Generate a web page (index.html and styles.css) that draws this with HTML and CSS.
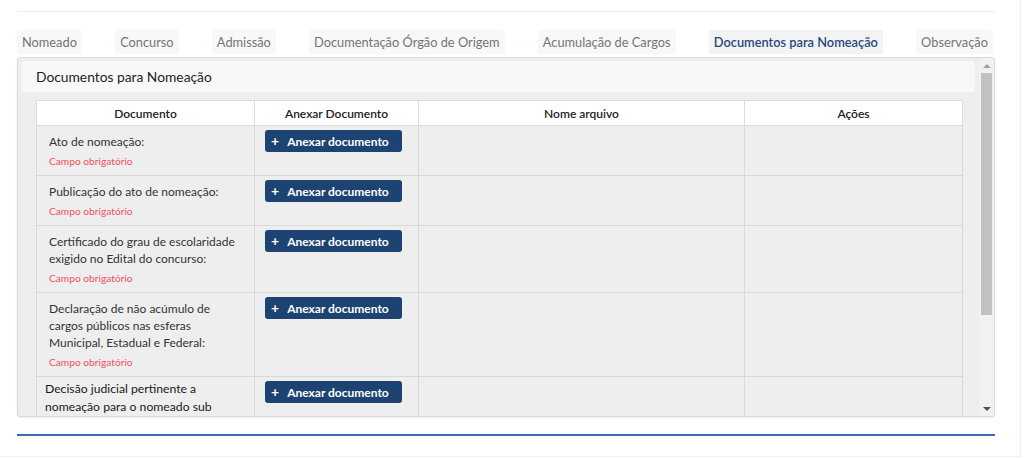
FILE: index.html
```html
<!DOCTYPE html>
<html lang="pt-BR">
<head>
<meta charset="utf-8">
<title>Documentos para Nomeação</title>
<link rel="stylesheet" href="styles.css">
</head>
<body>
<div class="page">
  <div class="top-rule"></div>
  <nav class="tabs">
    <span class="tab">Nomeado</span>
    <span class="tab">Concurso</span>
    <span class="tab">Admissão</span>
    <span class="tab">Documentação Órgão de Origem</span>
    <span class="tab">Acumulação de Cargos</span>
    <span class="tab active">Documentos para Nomeação</span>
    <span class="tab">Observação</span>
  </nav>
  <section class="panel">
    <div class="scroll-area">
      <h2 class="panel-title">Documentos para Nomeação</h2>
      <div class="panel-body">
        <table class="docs">
          <colgroup>
            <col class="c-doc"><col class="c-anexo"><col class="c-nome"><col class="c-acoes">
          </colgroup>
          <thead>
            <tr><th>Documento</th><th>Anexar Documento</th><th>Nome arquivo</th><th>Ações</th></tr>
          </thead>
          <tbody>
            <tr>
              <td class="doc"><div class="label">Ato de nomeação:</div><div class="req">Campo obrigatório</div></td>
              <td class="attach"><button class="btn"><span class="plus">+</span>Anexar documento</button></td>
              <td></td><td></td>
            </tr>
            <tr>
              <td class="doc"><div class="label">Publicação do ato de nomeação:</div><div class="req">Campo obrigatório</div></td>
              <td class="attach"><button class="btn"><span class="plus">+</span>Anexar documento</button></td>
              <td></td><td></td>
            </tr>
            <tr>
              <td class="doc"><div class="label">Certificado do grau de escolaridade exigido no Edital do concurso:</div><div class="req">Campo obrigatório</div></td>
              <td class="attach"><button class="btn"><span class="plus">+</span>Anexar documento</button></td>
              <td></td><td></td>
            </tr>
            <tr>
              <td class="doc"><div class="label">Declaração de não acúmulo de cargos públicos nas esferas Municipal, Estadual e Federal:</div><div class="req">Campo obrigatório</div></td>
              <td class="attach"><button class="btn"><span class="plus">+</span>Anexar documento</button></td>
              <td></td><td></td>
            </tr>
            <tr>
              <td class="doc doc-alt"><div class="label-alt">Decisão judicial pertinente a nomeação para o nomeado sub judice:</div></td>
              <td class="attach"><button class="btn"><span class="plus">+</span>Anexar documento</button></td>
              <td></td><td></td>
            </tr>
          </tbody>
        </table>
      </div>
    </div>
    <div class="scrollbar" aria-hidden="true">
      <div class="sb-btn"><span class="tri-up"></span></div>
      <div class="sb-track"><div class="sb-thumb"></div></div>
      <div class="sb-btn"><span class="tri-down"></span></div>
    </div>
  </section>
  <div class="bottom-rule"></div>
</div>
</body>
</html>
```
FILE: styles.css
```css
* { box-sizing: border-box; }
html, body { margin: 0; padding: 0; background: #fff; }
body {
  font-family: "Lato", "Noto Sans", sans-serif;
  color: #333;
  width: 1024px;
  height: 458px;
  overflow: hidden;
}
.page {
  width: 1021px;
  height: 457px;
  border-right: 1px solid #f0f0f0;
  border-bottom: 1px solid #f0f0f0;
  padding: 11px 25px 0 17px;
}
.top-rule {
  height: 1px;
  background: #ececec;
  margin-right: 1px;
}
.tabs {
  display: flex;
  justify-content: space-between;
  margin-top: 18px;
  padding-right: 2px;
  height: 27px;
  align-items: flex-start;
}
.tab {
  display: inline-block;
  height: 24px;
  line-height: 24px;
  padding: 0 5px;
  font-size: 12.8px;
  color: #747474;
  background: #f8f8f8;
  border-radius: 3px 3px 0 0;
  white-space: nowrap;
}
.tab.active {
  color: #1f4a7e;
  background: #f3f3f3;
  font-weight: 600;
}
.panel {
  display: flex;
  height: 360px;
  border: 1px solid #dadada;
  border-radius: 3px;
  background: #eeeeee;
  overflow: hidden;
  box-shadow: 0 1px 2px rgba(0,0,0,0.08);
}
.scroll-area {
  flex: 1;
  min-width: 0;
  overflow: hidden;
  padding: 3px 4px 0;
}
.panel-title {
  margin: 0;
  height: 31px;
  line-height: 31px;
  padding: 0 14px;
  background: #f8f8f8;
  border-radius: 3px;
  font-size: 13.8px;
  font-weight: 400;
  color: #1e1e1e;
}
.panel-body {
  padding: 8px 14px 60px;
}
.docs {
  width: 100%;
  table-layout: fixed;
  border-collapse: collapse;
  font-size: 12px;
}
.c-doc { width: 218px; }
.c-anexo { width: 164px; }
.c-nome { width: 326px; }
.c-acoes { width: 218px; }
.docs th {
  background: #fff;
  height: 25px;
  border: 1px solid #dcdcdc;
  font-weight: 600;
  color: #222;
  font-size: 12px;
  text-align: center;
  padding: 0;
}
.docs td {
  border: 1px solid #d8d8d8;
  vertical-align: top;
  background: #eeeeee;
  padding: 0;
}
.doc { padding: 7px 12px 6px !important; }
.label { line-height: 17px; color: #333; }
.req {
  margin-top: 3px;
  line-height: 16px;
  font-size: 10.2px;
  color: #f4505a;
}
.doc-alt { padding: 3px 8px 6px !important; }
.label-alt { line-height: 18px; color: #1a1a1a; font-size: 12.2px; }
.attach { padding: 4px 10px 0 !important; }
.btn {
  display: flex;
  align-items: center;
  width: 137px;
  height: 22px;
  border: 0;
  border-radius: 3px;
  background: #1c4371;
  color: #fff;
  font-family: inherit;
  font-size: 12px;
  font-weight: 700;
  padding: 0 0 0 6px;
  cursor: pointer;
}
.plus { font-size: 14px; margin-right: 8px; line-height: 1; }
.scrollbar {
  width: 15px;
  flex: none;
  display: flex;
  flex-direction: column;
  background: #f1f1f1;
}
.sb-btn {
  height: 15px;
  display: flex;
  align-items: center;
  justify-content: center;
}
.tri-up, .tri-down {
  width: 0;
  height: 0;
  border-left: 4px solid transparent;
  border-right: 4px solid transparent;
}
.tri-up { border-bottom: 4px solid #a3a3a3; }
.tri-down { border-top: 4px solid #505050; }
.sb-track { flex: 1; padding: 0 2px; }
.sb-thumb {
  height: 242px;
  background: #c1c1c1;
}
.bottom-rule {
  height: 2px;
  background: #3a6cb2;
  margin-top: 17px;
}
```
